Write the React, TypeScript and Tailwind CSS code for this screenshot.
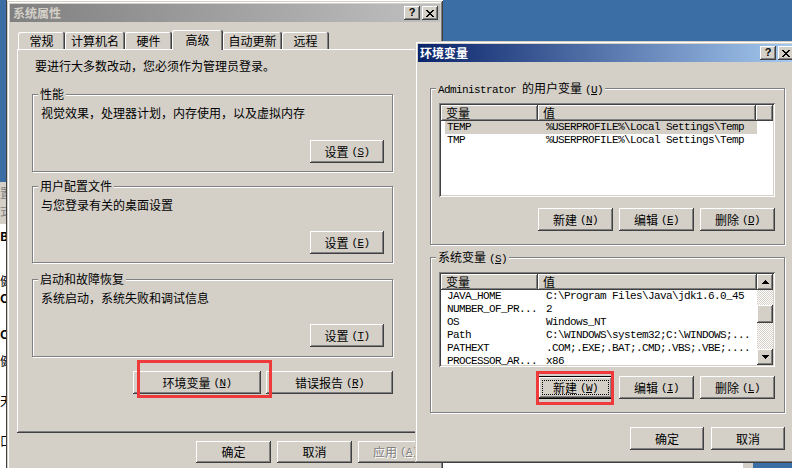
import type { ReactNode } from 'react';

const RAISED = 'shadow-[inset_-1px_-1px_#404040,inset_1px_1px_#ffffff,inset_-2px_-2px_#808080]';
const FOCUSED = 'border border-black p-[3px] shadow-[inset_-1px_-1px_#404040,inset_1px_1px_#ffffff,inset_-2px_-2px_#808080]';
const SUNKEN = 'shadow-[inset_1px_1px_#808080,inset_-1px_-1px_#ffffff,inset_2px_2px_#404040,inset_-2px_-2px_#d4d0c8]';
const WINDOW = 'shadow-[inset_-1px_-1px_#404040,inset_1px_1px_#d4d0c8,inset_-2px_-2px_#808080,inset_2px_2px_#ffffff]';
const ETCHED = 'border border-[#808080] shadow-[inset_1px_1px_#ffffff,1px_1px_#ffffff]';
const TAB = 'rounded-t-[2px] shadow-[inset_-1px_0_#404040,inset_1px_1px_#ffffff,inset_-2px_0_#808080]';
const MONO = "font-['Liberation_Mono','Noto_Sans_CJK_SC',monospace] text-[11px] tracking-[-0.6px]";

type BtnProps = {
  children?: ReactNode;
  className?: string;
  focused?: boolean;
  disabled?: boolean;
};

function Btn({ children, className = '', focused = false, disabled = false }: BtnProps) {
  return (
    <div
      className={`flex shrink-0 items-center justify-center bg-[#d4d0c8] leading-[14px] ${
        focused ? FOCUSED : RAISED
      } ${disabled ? 'text-[#808080] [text-shadow:1px_1px_#ffffff]' : 'text-black'} ${className}`}
    >
      {focused ? (
        <div className="flex h-full w-full items-center justify-center border border-dotted border-black">
          {children}
        </div>
      ) : (
        children
      )}
    </div>
  );
}

function Acc({ k }: { k: string }) {
  return (
    <span className={`${MONO} ml-[3px]`}>
      (<span className="underline underline-offset-[1px]">{k}</span>)
    </span>
  );
}

function CapBtn({ children }: { children: ReactNode }) {
  return (
    <div className={`flex h-[14px] w-[16px] items-center justify-center bg-[#d4d0c8] ${RAISED}`}>
      {children}
    </div>
  );
}

function CloseX() {
  return (
    <svg width="8" height="7" viewBox="0 0 8 7" shapeRendering="crispEdges">
      <path
        fill="#000"
        d="M0 0h2v1H0z M6 0h2v1H6z M1 1h2v1H1z M5 1h2v1H5z M2 2h4v1H2z M3 3h2v1H3z M2 4h4v1H2z M1 5h2v1H1z M5 5h2v1H5z M0 6h2v1H0z M6 6h2v1H6z"
      />
    </svg>
  );
}

function HelpQ() {
  return (
    <span className="-mt-px font-['Liberation_Sans',sans-serif] text-[11px] font-bold leading-none">?</span>
  );
}

function Group({ label, className = '', children }: { label: ReactNode; className?: string; children: ReactNode }) {
  return (
    <div className={`relative ${ETCHED} ${className}`}>
      <span className="absolute -top-[8px] left-[5px] whitespace-nowrap bg-[#d4d0c8] px-[2px] leading-[14px]">
        {label}
      </span>
      {children}
    </div>
  );
}

function HeaderCell({ children, className = '' }: { children?: ReactNode; className?: string }) {
  return (
    <div className={`flex shrink-0 items-center bg-[#d4d0c8] pl-[5px] leading-[14px] ${RAISED} ${className}`}>
      {children}
    </div>
  );
}

function Row({ name, value, selected = false, className = '' }: { name: string; value: string; selected?: boolean; className?: string }) {
  return (
    <div className={`ml-[4px] flex h-[13px] shrink-0 items-center ${selected ? 'bg-[#d4d0c8]' : ''} ${className}`}>
      <span className={`w-[99px] shrink-0 whitespace-nowrap pl-[2px] leading-[13px] ${MONO}`}>{name}</span>
      <span className={`whitespace-nowrap pl-[2px] leading-[13px] ${MONO}`}>{value}</span>
    </div>
  );
}

function Arrow({ down = false }: { down?: boolean }) {
  return (
    <div className={`flex h-[16px] w-[16px] shrink-0 items-center justify-center bg-[#d4d0c8] ${RAISED}`}>
      <svg width="7" height="4" viewBox="0 0 7 4" shapeRendering="crispEdges">
        <path
          fill="#000"
          d={
            down
              ? 'M0 0h7v1H0z M1 1h5v1H1z M2 2h3v1H2z M3 3h1v1H3z'
              : 'M3 0h1v1H3z M2 1h3v1H2z M1 2h5v1H1z M0 3h7v1H0z'
          }
        />
      </svg>
    </div>
  );
}

const tabs = [
  { label: '常规', cls: 'w-[47px] h-[17px]' },
  { label: '计算机名', cls: 'w-[60px] h-[17px]' },
  { label: '硬件', cls: 'w-[47px] h-[17px]' },
  { label: '高级', cls: 'w-[51px] h-[20px] -mb-px', active: true },
  { label: '自动更新', cls: 'w-[59px] h-[17px]' },
  { label: '远程', cls: 'w-[47px] h-[17px]' },
];

const sysVars = [
  ['JAVA_HOME', 'C:\\Program Files\\Java\\jdk1.6.0_45'],
  ['NUMBER_OF_PR...', '2'],
  ['OS', 'Windows_NT'],
  ['Path', 'C:\\WINDOWS\\system32;C:\\WINDOWS;...'],
  ['PATHEXT', '.COM;.EXE;.BAT;.CMD;.VBS;.VBE;....'],
  ['PROCESSOR_AR...', 'x86'],
];

function SystemProperties() {
  return (
    <div className={`absolute left-[7px] top-[1px] flex h-[480px] w-[436px] flex-col bg-[#d4d0c8] p-[3px] ${WINDOW}`}>
      <div className="flex h-[18px] shrink-0 items-center justify-between bg-[linear-gradient(to_right,#808080,#c0c0c0)] pl-[3px] pr-[2px]">
        <span className="font-bold leading-[14px] text-[#d4d0c8]">系统属性</span>
        <div className="flex gap-[2px]">
          <CapBtn>
            <HelpQ />
          </CapBtn>
          <CapBtn>
            <CloseX />
          </CapBtn>
        </div>
      </div>

      <div className="px-[7px] pt-[8px]">
        <div className="relative z-10 flex h-[19px] items-end pl-[1px]">
          {tabs.map((tab) => (
            <div
              key={tab.label}
              className={`flex shrink-0 items-center justify-center bg-[#d4d0c8] leading-[14px] ${TAB} ${tab.cls}`}
            >
              {tab.label}
            </div>
          ))}
        </div>

        <div className={`flex h-[384px] w-[416px] flex-col pl-[15px] pt-[10px] ${RAISED}`}>
          <p className="pl-[3px] leading-[14px]">要进行大多数改动，您必须作为管理员登录。</p>

          <Group label="性能" className="mt-[21px] flex h-[78px] w-[361px] flex-col">
            <p className="pl-[8px] pt-[11px] leading-[14px]">视觉效果，处理器计划，内存使用，以及虚拟内存</p>
            <div className="mt-auto flex justify-end pb-[8px] pr-[8px]">
              <Btn className="h-[23px] w-[74px]">
                设置<Acc k="S" />
              </Btn>
            </div>
          </Group>

          <Group label="用户配置文件" className="mt-[14px] flex h-[77px] w-[361px] flex-col">
            <p className="pl-[8px] pt-[11px] leading-[14px]">与您登录有关的桌面设置</p>
            <div className="mt-auto flex justify-end pb-[8px] pr-[8px]">
              <Btn className="h-[23px] w-[74px]">
                设置<Acc k="E" />
              </Btn>
            </div>
          </Group>

          <Group label="启动和故障恢复" className="mt-[16px] flex h-[78px] w-[361px] flex-col">
            <p className="pl-[8px] pt-[11px] leading-[14px]">系统启动，系统失败和调试信息</p>
            <div className="mt-auto flex justify-end pb-[9px] pr-[8px]">
              <Btn className="h-[23px] w-[74px]">
                设置<Acc k="T" />
              </Btn>
            </div>
          </Group>

          <div className="mt-[14px] flex w-[361px] justify-end gap-[5px]">
            <Btn className="h-[23px] w-[128px]">
              环境变量<Acc k="N" />
            </Btn>
            <Btn className="h-[23px] w-[127px]">
              错误报告<Acc k="R" />
            </Btn>
          </div>
        </div>

        <div className="mt-[8px] flex w-[416px] justify-end gap-[6px]">
          <Btn className="h-[22px] w-[75px]">确定</Btn>
          <Btn className="h-[22px] w-[75px]">取消</Btn>
          <Btn className="h-[22px] w-[75px]" disabled>
            应用<Acc k="A" />
          </Btn>
        </div>
      </div>
    </div>
  );
}

function EnvironmentVariables() {
  return (
    <div className={`absolute left-[415px] top-[41px] flex h-[422px] w-[384px] flex-col bg-[#d4d0c8] p-[3px] ${WINDOW}`}>
      <div className="flex h-[18px] shrink-0 items-center justify-between bg-[linear-gradient(to_right,#0a246a,#a6caf0)] pl-[2px] pr-[2px]">
        <span className="font-bold leading-[14px] text-white">环境变量</span>
        <div className="flex gap-[2px]">
          <CapBtn>
            <HelpQ />
          </CapBtn>
          <CapBtn>
            <CloseX />
          </CapBtn>
        </div>
      </div>

      <div className="px-[12px] pt-[26px]">
        <Group
          label={
            <>
              <span className={MONO}>Administrator </span>的用户变量<Acc k="U" />
            </>
          }
          className="h-[157px] w-[355px] pl-[8px] pt-[14px]"
        >
          <div className={`flex h-[94px] w-[336px] flex-col bg-white p-[2px] ${SUNKEN}`}>
            <div className="flex h-[16px] shrink-0">
              <HeaderCell className="w-[97px]">变量</HeaderCell>
              <HeaderCell className="w-[218px]">值</HeaderCell>
              <HeaderCell className="flex-1" />
            </div>
            <Row name="TEMP" value="%USERPROFILE%\Local Settings\Temp" selected className="w-[312px]" />
            <Row name="TMP" value="%USERPROFILE%\Local Settings\Temp" className="w-[312px]" />
          </div>
          <div className="mt-[11px] flex w-[336px] justify-end gap-[6px]">
            <Btn className="h-[23px] w-[75px]">
              新建<Acc k="N" />
            </Btn>
            <Btn className="h-[23px] w-[75px]">
              编辑<Acc k="E" />
            </Btn>
            <Btn className="h-[23px] w-[75px]">
              删除<Acc k="D" />
            </Btn>
          </div>
        </Group>

        <Group
          label={
            <>
              系统变量<Acc k="S" />
            </>
          }
          className="mt-[12px] h-[156px] w-[355px] pl-[8px] pt-[14px]"
        >
          <div className={`flex h-[95px] w-[336px] bg-white p-[2px] ${SUNKEN}`}>
            <div className="flex min-w-0 flex-1 flex-col overflow-hidden">
              <div className="flex h-[16px] shrink-0">
                <HeaderCell className="w-[97px]">变量</HeaderCell>
                <HeaderCell className="flex-1">值</HeaderCell>
              </div>
              {sysVars.map(([name, value]) => (
                <Row key={name} name={name} value={value} />
              ))}
            </div>
            <div className="flex w-[16px] shrink-0 flex-col">
              <Arrow />
              <div className="flex flex-1 flex-col bg-[repeating-conic-gradient(#d4d0c8_0%_25%,#ffffff_0%_50%)] bg-[length:2px_2px]">
                <div className={`mt-[15px] h-[18px] bg-[#d4d0c8] ${RAISED}`} />
              </div>
              <Arrow down />
            </div>
          </div>
          <div className="mt-[9px] flex w-[336px] justify-end gap-[6px]">
            <Btn className="h-[23px] w-[75px]" focused>
              新建<Acc k="W" />
            </Btn>
            <Btn className="h-[23px] w-[75px]">
              编辑<Acc k="I" />
            </Btn>
            <Btn className="h-[23px] w-[75px]">
              删除<Acc k="L" />
            </Btn>
          </div>
        </Group>

        <div className="mt-[14px] flex w-[355px] justify-end gap-[7px]">
          <Btn className="h-[23px] w-[74px]">确定</Btn>
          <Btn className="h-[23px] w-[74px]">取消</Btn>
        </div>
      </div>
    </div>
  );
}

// fragments of the window lying behind, at the far left edge
function BackdropStrip() {
  return (
    <div className="absolute left-0 top-0 flex h-[468px] w-[7px] flex-col overflow-hidden border-r border-[#404040]">
      <div className="h-[182px] shrink-0 bg-[#3a6ea5]" />
      <div className="flex h-[42px] shrink-0 flex-col bg-[#d4d0c8] pt-[2px] leading-[18px] text-[#808080]">
        <span>置</span>
        <span>式</span>
      </div>
      <div className="flex flex-1 flex-col whitespace-nowrap bg-white leading-[17px] text-black">
        <span className="mt-[3px] font-bold">B</span>
        <span className="mt-[28px]">健</span>
        <span className="font-bold">C</span>
        <span className="mt-[19px] font-bold">C</span>
        <span className="mt-[10px]">健</span>
        <span className="mt-[23px]">天</span>
        <span className="mt-[23px]">口</span>
      </div>
    </div>
  );
}

export default function App() {
  return (
    <div className="relative h-[468px] w-[792px] overflow-hidden bg-[#3a6ea5] font-['Noto_Sans_CJK_SC',sans-serif] text-[12px] text-black">
      <BackdropStrip />
      <div className="absolute left-[7px] top-0 h-[1px] w-[436px] bg-white" />
      <div className="absolute left-[443px] top-[455px] h-[20px] w-[310px] border-r-[10px] border-[#d4d0c8] bg-white" />
      <SystemProperties />
      <EnvironmentVariables />
      <div className="absolute left-[137px] top-[360px] h-[38px] w-[135px] border-[3px] border-[#ee3a3a]" />
      <div className="absolute left-[536px] top-[371px] h-[34px] w-[78px] border-[3px] border-[#ee3a3a]" />
    </div>
  );
}
